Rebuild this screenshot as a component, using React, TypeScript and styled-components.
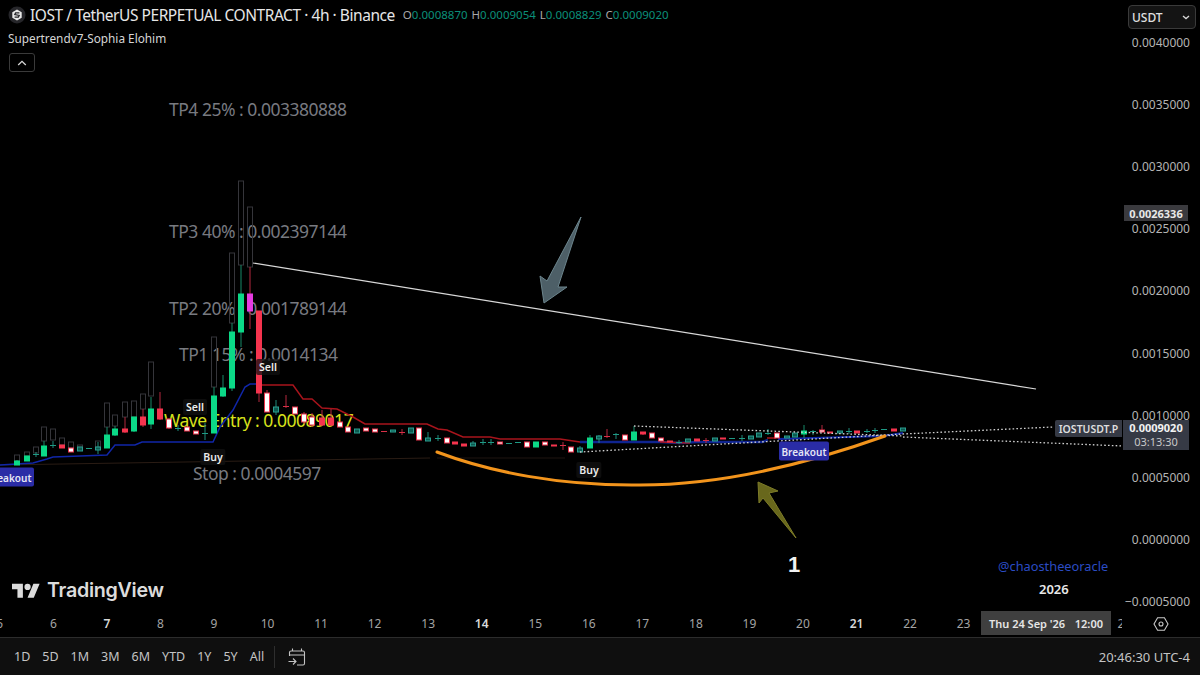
import styled, { createGlobalStyle } from "styled-components";

type CandleKind = "g" | "r" | "w" | "t" | "m" | "d" | "e";
// x, body top, body bottom, kind, wick top, wick bottom, ghost top, ghost bottom
type Candle = [number, number, number, CandleKind, number?, number?, number?, number?];

const CANDLES: Candle[] = [
    [17, 461, 465, "g", 460, 465, 455, 461], [27, 456, 461, "g", 456, 461, 452, 456],
    [36, 454, 455, "d", 452, 457, 447, 453], [44, 446, 456, "g", 441, 456, 427, 441],
    [53, 445, 446, "d", 441, 448, 429, 440], [62, 445, 448, "r", 445, 448, 438, 445],
    [71, 448, 452, "w", 448, 452, 442, 448], [80, 447, 451, "t", 447, 451, 445, 447],
    [89, 448, 449, "d"], [98, 447, 450, "t", 442, 454, 441, 447],
    [107, 435, 448, "g", 427, 448, 403, 427], [115, 429, 435, "g", 426, 436, 415, 426],
    [125, 429, 432, "r", 417, 433, 402, 417], [134, 417, 431, "g", 417, 432, 401, 417],
    [143, 417, 425, "r", 409, 427, 394, 409], [151, 409, 424, "g", 397, 429, 362, 396],
    [160, 409, 419, "r", 392, 420], [169, 419, 428, "w", 418, 429],
    [178, 428, 429, "d", 425, 431], [187, 427, 431, "w"], [196, 431, 434, "w"],
    [205, 433, 434, "d", 423, 440], [214, 396, 433, "g", 387, 433, 337, 387],
    [223, 388, 396, "g", 375, 397], [232, 332, 388, "g", 323, 391, 253, 323],
    [241, 294, 332, "g", 265, 347, 181, 265], [250, 294, 311, "m", 267, 329, 207, 267],
    [259, 311, 393, "r", 311, 402], [267, 393, 412, "w", 390, 412],
    [276, 407, 412, "t", 400, 415], [286, 406, 407, "e", 395, 408], [295, 407, 414, "w"],
    [304, 414, 422, "w", 412, 424], [312, 417, 425, "w", 413, 427], [322, 418, 425, "r", 410, 426],
    [331, 418, 425, "r", 409, 426], [340, 422, 427, "w"], [348, 427, 432, "w"], [357, 429, 433, "t"],
    [366, 428, 431, "w"], [375, 429, 432, "w"], [384, 431, 432, "e"], [393, 430, 432, "t"],
    [402, 432, 433, "e", 429, 435], [411, 428, 433, "t"], [419, 428, 440, "w"],
    [428, 438, 441, "t", 432, 441], [438, 438, 439, "d", 435, 441], [447, 438, 443, "w"],
    [455, 442, 444, "r"], [464, 444, 446, "r"], [473, 443, 446, "t", 441, 446],
    [483, 442, 443, "d", 439, 445], [491, 442, 443, "d", 439, 445], [500, 442, 444, "w"],
    [509, 443, 444, "d"], [518, 442, 443, "d"], [527, 442, 447, "w"], [536, 442, 447, "g"],
    [545, 442, 445, "w"], [554, 445, 446, "r"], [563, 445, 446, "e", 442, 450],
    [571, 447, 452, "w"], [580, 448, 452, "t", 446, 452], [590, 438, 448, "g", 435, 448],
    [599, 436, 439, "t", 435, 443], [607, 436, 437, "e", 429, 438], [616, 434, 435, "d", 433, 439],
    [625, 435, 440, "w"], [634, 432, 440, "g", 426, 440], [643, 432, 434, "r", 432, 435],
    [652, 433, 438, "w"], [661, 438, 441, "w"], [670, 441, 442, "w"], [679, 442, 443, "d", 440, 444],
    [688, 439, 442, "t"], [697, 439, 441, "r"], [706, 440, 441, "e", 438, 443], [715, 438, 441, "t"],
    [723, 438, 439, "r"], [732, 438, 439, "d"], [742, 438, 439, "d", 435, 441], [751, 436, 439, "t"],
    [759, 433, 437, "t"], [768, 433, 434, "d", 429, 435], [777, 433, 438, "w"], [787, 436, 438, "t"],
    [795, 433, 437, "t"], [804, 431, 434, "g", 425, 438], [813, 431, 432, "d", 430, 435],
    [822, 430, 432, "w", 425, 433], [830, 432, 433, "r"], [840, 431, 433, "t"], [849, 431, 432, "d", 428, 434],
    [857, 431, 433, "r"], [867, 431, 432, "d", 429, 433], [875, 430, 431, "d", 428, 433],
    [884, 429, 430, "d"], [894, 429, 431, "r"], [903, 428, 431, "t"],
];

const BODY: Record<CandleKind, { fill: string; stroke: string; wick: string }> = {
    g: { fill: "#0bd987", stroke: "#0bd987", wick: "#168a68" },
    r: { fill: "#f5344e", stroke: "#f5344e", wick: "#b4283e" },
    w: { fill: "#ffffff", stroke: "#e8324a", wick: "#b4283e" },
    t: { fill: "#0d5a50", stroke: "#2a9d8f", wick: "#1f8a7a" },
    m: { fill: "#e53be0", stroke: "#e53be0", wick: "#b4283e" },
    d: { fill: "#1f9a85", stroke: "#1f9a85", wick: "#1f8a7a" },
    e: { fill: "#d92f47", stroke: "#d92f47", wick: "#b4283e" },
};

const PRICES = ["0.0040000", "0.0035000", "0.0030000", "0.0025000", "0.0020000", "0.0015000", "0.0010000", "0.0005000", "0.0000000", "\u22120.0005000"];
const TICKS = [5, 6, 7, 8, 9, 10, 11, 12, 13, 14, 15, 16, 17, 18, 19, 20, 21, 22, 23, 24, 25, 26];
const RANGES = ["1D", "5D", "1M", "3M", "6M", "YTD", "1Y", "5Y", "All"];
const OHLC = [["O", "0.0008870"], ["H", "0.0009054"], ["L", "0.0008829"], ["C", "0.0009020"]];
const FONT = `"Noto Sans", "Open Sans", sans-serif`;

export default function App() {
    return (
        <>
            <GlobalStyle />
            <Page>
                <Main>
                    <ChartColumn>
                        <Pane>
                            <ChartText $x={169} $y={98}>TP4 25% : 0.003380888</ChartText>
                            <ChartText $x={169} $y={220}>TP3 40% : 0.002397144</ChartText>
                            <ChartText $x={169} $y={297}>TP2 20% : 0.001789144</ChartText>
                            <ChartText $x={179} $y={343}>TP1 15% : 0.0014134</ChartText>
                            <ChartText $x={193} $y={462}>Stop : 0.0004597</ChartText>
                            <ChartText $x={164} $y={409} $color="#d8e21c">Wave Entry : 0.00089017</ChartText>

                            <ChartSvg viewBox="0 0 1122 610">
                                <polyline points="0,465 430,458" fill="none" stroke="#2a1c14" strokeWidth="1" />
                                <polyline points="437,458 565,458" fill="none" stroke="#1f1410" strokeWidth="1" />
                                <polyline
                                    points="0,465 33,463 47,459 53,457 107,455 115,445 135,445 142,442 213,442 220,427 233,410 245,387 250,384 259,384"
                                    fill="none" stroke="#1026a8" strokeWidth="1.5"
                                />
                                <polyline
                                    points="580,442 660,442 680,443 697,442 762,442 768,440"
                                    fill="none" stroke="#0f2490" strokeWidth="2.5"
                                />
                                <polyline points="778,439 883,436 903,433" fill="none" stroke="#1026a8" strokeWidth="2" />
                                <polyline
                                    points="259,385 293,385 303,399 312,399 322,408 337,409 353,417 365,424 427,424 438,429 447,430 463,437 490,437 500,439 560,439 580,442"
                                    fill="none" stroke="#a8141c" strokeWidth="1.5"
                                />
                                <polyline points="660,442 690,443" fill="none" stroke="#a8141c" strokeWidth="1.5" />
                                <polyline points="767,438 776,438" fill="none" stroke="#a8141c" strokeWidth="1.5" />

                                {CANDLES.map(([x, top, bottom, kind, wickTop, wickBottom, ghostTop, ghostBottom]) => {
                                    const c = BODY[kind];
                                    const flat = kind === "d" || kind === "e";
                                    return (
                                        <g key={x}>
                                            {ghostTop !== undefined && ghostBottom !== undefined && (
                                                <rect x={x - 2.5} y={ghostTop} width={5} height={ghostBottom - ghostTop} fill="none" stroke="#35353a" strokeWidth="1" />
                                            )}
                                            {wickTop !== undefined && wickBottom !== undefined && (
                                                <line x1={x} x2={x} y1={wickTop} y2={wickBottom} stroke={c.wick} strokeWidth="1" />
                                            )}
                                            {flat ? (
                                                <rect x={x - 3} y={top} width={6} height={bottom - top} fill={c.fill} />
                                            ) : (
                                                <rect x={x - 2.5} y={top} width={5} height={bottom - top} fill={c.fill} stroke={c.stroke} strokeWidth="1" />
                                            )}
                                        </g>
                                    );
                                })}

                                <polyline points="634,426 903,436" fill="none" stroke="#d0d0d0" strokeWidth="1.3" strokeDasharray="1.6 2.2" />
                                <polyline points="580,452 903,434 1053,427" fill="none" stroke="#d0d0d0" strokeWidth="1.3" strokeDasharray="1.6 2.2" />
                                <polyline points="903,437 1123,446" fill="none" stroke="#d0d0d0" strokeWidth="1.3" strokeDasharray="1.6 2.2" />
                                <line x1="253" y1="263" x2="1036" y2="389" stroke="#d8d8d8" strokeWidth="1.2" />
                                <path
                                    d="M437 452 C 490 472 560 486 640 485 C 710 485 790 470 885 436"
                                    fill="none" stroke="#f2941c" strokeWidth="3" strokeLinecap="round"
                                />
                                <polygon points="544,303 540,276 547,281 581,217 558,287 567,287" fill="#4d5f67" stroke="#6c858d" strokeWidth="1" />
                                <polygon points="758,482 778,491 769,493 796,538 763,498 759,503" fill="#68671c" stroke="#7d7c28" strokeWidth="1" />
                            </ChartSvg>

                            <Legend>
                                <TitleRow>
                                    <svg width="18" height="18" viewBox="0 0 18 18">
                                        <circle cx="9" cy="9" r="8.5" fill="#26262a" />
                                        <polygon points="9,3.6 13.7,6.3 13.7,11.7 9,14.4 4.3,11.7 4.3,6.3" fill="#e8e8e8" />
                                        <path d="M11.4 6.9H7.6L6.8 8.6 11.2 9.4 10.4 11.1H6.6" fill="none" stroke="#26262a" strokeWidth="1.3" />
                                    </svg>
                                    <SymbolTitle>IOST / TetherUS PERPETUAL CONTRACT · 4h · Binance</SymbolTitle>
                                    <Ohlc>
                                        {OHLC.map(([k, v]) => (
                                            <span key={k}>{k}<OhlcValue>{v}</OhlcValue></span>
                                        ))}
                                    </Ohlc>
                                </TitleRow>
                                <IndicatorName>Supertrendv7-Sophia Elohim</IndicatorName>
                                <CollapseButton>
                                    <svg width="10" height="6" viewBox="0 0 10 6">
                                        <path d="M1.2 5 5 1.4 8.8 5" fill="none" stroke="#d8d8d8" strokeWidth="1.3" />
                                    </svg>
                                </CollapseButton>
                            </Legend>

                            <ChartTag $x={195} $y={407}>Sell</ChartTag>
                            <ChartTag $x={268} $y={367}>Sell</ChartTag>
                            <ChartTag $x={213} $y={457}>Buy</ChartTag>
                            <ChartTag $x={589} $y={470}>Buy</ChartTag>
                            <BreakoutTag $x={9} $y={477}>Breakout</BreakoutTag>
                            <BreakoutTag $x={804} $y={451}>Breakout</BreakoutTag>

                            <BigNumber>1</BigNumber>
                            <Handle>@chaostheeoracle</Handle>
                            <YearMark>2026</YearMark>
                            <Brand>
                                <svg width="28" height="16" viewBox="0 0 36 20">
                                    <path d="M14 20H7V9H0V2h14v18zM28 20h-8l7.5-18h8L28 20z" fill="#dcdcdc" />
                                    <circle cx="20" cy="6" r="4" fill="#dcdcdc" />
                                </svg>
                                <BrandName>TradingView</BrandName>
                            </Brand>
                            <SymbolTag>IOSTUSDT.P</SymbolTag>
                        </Pane>
                        <TimeAxis>
                            {TICKS.map((t) => (
                                <Tick key={t} $strong={t === 7 || t === 14 || t === 21}>{t}</Tick>
                            ))}
                            <Crosshair>
                                <span>Thu 24 Sep '26</span>
                                <span>12:00</span>
                            </Crosshair>
                        </TimeAxis>
                    </ChartColumn>

                    <PriceColumn>
                        <PriceAxis>
                            <CurrencySelect>
                                USDT
                                <svg width="8" height="5" viewBox="0 0 8 5">
                                    <path d="M1 1l3 2.6L7 1" fill="none" stroke="#d8d8d8" strokeWidth="1.3" />
                                </svg>
                            </CurrencySelect>
                            {PRICES.map((p) => (
                                <PriceLabel key={p}>{p}</PriceLabel>
                            ))}
                            <LevelTag>0.0026336</LevelTag>
                            <LastPriceTag>
                                <strong>0.0009020</strong>
                                <span>03:13:30</span>
                            </LastPriceTag>
                        </PriceAxis>
                        <GearCell>
                            <svg width="16" height="16" viewBox="0 0 16 16">
                                <polygon points="4.6,1.8 11.4,1.8 15,8 11.4,14.2 4.6,14.2 1,8" fill="none" stroke="#c8c8c8" strokeWidth="1.1" />
                                <circle cx="8" cy="8" r="2" fill="none" stroke="#c8c8c8" strokeWidth="1.1" />
                            </svg>
                        </GearCell>
                    </PriceColumn>
                </Main>

                <BottomBar>
                    <Ranges>
                        {RANGES.map((r) => (
                            <RangeButton key={r}>{r}</RangeButton>
                        ))}
                        <Divider />
                        <svg width="20" height="20" viewBox="0 0 20 20">
                            <path
                                d="M5.5 1.5v3M14.5 1.5v3M2.5 9V5.5a1.5 1.5 0 0 1 1.5-1.5h12a1.5 1.5 0 0 1 1.5 1.5v11a1.5 1.5 0 0 1-1.5 1.5H10M2.5 8h15M1.5 14.5h7M6 11.5l3 3-3 3"
                                fill="none" stroke="#c4c4c4" strokeWidth="1.1"
                            />
                        </svg>
                    </Ranges>
                    <Clock>20:46:30 UTC-4</Clock>
                </BottomBar>
            </Page>
        </>
    );
}

const GlobalStyle = createGlobalStyle`
    html, body {
        margin: 0;
        padding: 0;
        background: #000;
    }
`;

const Page = styled.div`
    width: 1200px;
    height: 675px;
    display: flex;
    flex-direction: column;
    overflow: hidden;
    background: #000;
    font-family: ${FONT};
`;

const Main = styled.div`
    flex: 1;
    display: flex;
    min-height: 0;
`;

const ChartColumn = styled.div`
    width: 1122px;
    display: flex;
    flex-direction: column;
`;

const Pane = styled.div`
    position: relative;
    flex: 1;
    overflow: hidden;
`;

const ChartSvg = styled.svg`
    position: absolute;
    inset: 0;
    width: 100%;
    height: 100%;
    z-index: 1;
`;

const Legend = styled.div`
    position: relative;
    z-index: 2;
    display: flex;
    flex-direction: column;
    align-items: flex-start;
    padding: 5px 0 0 8px;
`;

const TitleRow = styled.div`
    display: flex;
    align-items: center;
    height: 19px;
`;

const SymbolTitle = styled.span`
    margin-left: 4px;
    font-size: 15.5px;
    letter-spacing: -0.45px;
    color: #e6e6e6;
    white-space: nowrap;
`;

const Ohlc = styled.span`
    display: flex;
    gap: 4px;
    margin-left: 8px;
    font-size: 11.5px;
    color: #a8a8a8;
`;

const OhlcValue = styled.span`
    color: #0b8f7a;
`;

const IndicatorName = styled.div`
    margin-top: 6px;
    font-size: 11.8px;
    line-height: 16px;
    color: #d6d6d6;
`;

const CollapseButton = styled.div`
    width: 26px;
    height: 19px;
    margin: 7px 0 0 1px;
    display: flex;
    align-items: center;
    justify-content: center;
    border: 1px solid #3a3a3a;
    border-radius: 3px;
    box-sizing: border-box;
`;

const ChartText = styled.div<{ $x: number; $y: number; $color?: string }>`
    position: absolute;
    left: ${(p) => p.$x}px;
    top: ${(p) => p.$y}px;
    font-size: 17.5px;
    letter-spacing: -0.5px;
    line-height: 22px;
    white-space: nowrap;
    color: ${(p) => p.$color ?? "#787a80"};
`;

const ChartTag = styled.div<{ $x: number; $y: number }>`
    position: absolute;
    z-index: 2;
    left: ${(p) => p.$x}px;
    top: ${(p) => p.$y}px;
    transform: translate(-50%, -50%);
    padding: 1px 3px;
    font-size: 10.5px;
    font-weight: 600;
    line-height: 14px;
    color: #ececec;
    background: rgba(18, 18, 18, 0.75);
    border-radius: 2px;
`;

const BreakoutTag = styled.div<{ $x: number; $y: number }>`
    position: absolute;
    z-index: 2;
    left: ${(p) => p.$x}px;
    top: ${(p) => p.$y}px;
    transform: translate(-50%, -50%);
    width: 50px;
    height: 19px;
    display: flex;
    align-items: center;
    justify-content: center;
    font-size: 10px;
    font-weight: 600;
    color: #e6e6f5;
    background: #2a2ca6;
    border-radius: 2px;
`;

const BigNumber = styled.div`
    position: absolute;
    z-index: 2;
    left: 788px;
    top: 552px;
    font-family: "Liberation Sans", sans-serif;
    font-size: 22px;
    font-weight: 700;
    line-height: 26px;
    color: #f2f2f2;
`;

const Handle = styled.div`
    position: absolute;
    z-index: 2;
    left: 998px;
    top: 557px;
    font-size: 12.8px;
    line-height: 18px;
    color: #2b4cc4;
`;

const YearMark = styled.div`
    position: absolute;
    z-index: 2;
    left: 1039px;
    top: 580px;
    font-size: 13px;
    font-weight: 600;
    line-height: 18px;
    color: #e8e8e8;
`;

const Brand = styled.div`
    position: absolute;
    z-index: 2;
    left: 12px;
    bottom: 8px;
    display: flex;
    align-items: center;
    gap: 7px;
`;

const BrandName = styled.span`
    font-family: "Inter", sans-serif;
    font-size: 19.7px;
    font-weight: 600;
    letter-spacing: -0.3px;
    color: #dcdcdc;
`;

const SymbolTag = styled.div`
    position: absolute;
    z-index: 2;
    right: 0;
    top: 420px;
    width: 67px;
    height: 17px;
    display: flex;
    align-items: center;
    justify-content: center;
    font-size: 10.5px;
    font-weight: 600;
    color: #dedede;
    background: #363a45;
    border-radius: 2px 0 0 2px;
`;

const TimeAxis = styled.div`
    position: relative;
    height: 27px;
    display: flex;
    align-items: center;
    overflow: hidden;
`;

const Tick = styled.span<{ $strong: boolean }>`
    flex: 0 0 53.55px;
    text-align: center;
    font-size: 12px;
    font-weight: ${(p) => (p.$strong ? 600 : 400)};
    color: ${(p) => (p.$strong ? "#d8d8d8" : "#a4a4a4")};
    &:first-child {
        margin-left: -27px;
    }
`;

const Crosshair = styled.div`
    position: absolute;
    left: 981px;
    top: 1px;
    width: 130px;
    height: 24px;
    box-sizing: border-box;
    padding: 0 8px;
    display: flex;
    align-items: center;
    justify-content: space-between;
    font-size: 11px;
    font-weight: 600;
    color: #e6e6e6;
    background: #3f3f3f;
`;

const PriceColumn = styled.div`
    position: relative;
    flex: 1;
    display: flex;
    flex-direction: column;
`;

const PriceAxis = styled.div`
    flex: 1;
    display: flex;
    flex-direction: column;
    align-items: flex-end;
    gap: 46.1px;
    padding-right: 10px;
`;

const CurrencySelect = styled.div`
    align-self: flex-end;
    width: 68px;
    height: 24px;
    margin: 5px -6px -40px 0;
    box-sizing: border-box;
    padding: 0 5px 0 3px;
    display: flex;
    align-items: center;
    justify-content: space-between;
    font-size: 12px;
    font-weight: 500;
    color: #e0e0e0;
    background: #141414;
    border: 1px solid #3a3a3a;
    border-radius: 4px;
`;

const PriceLabel = styled.div`
    font-size: 12px;
    line-height: 16px;
    white-space: nowrap;
    color: #b4b4b4;
`;

const LevelTag = styled.div`
    position: absolute;
    left: 2px;
    top: 205px;
    width: 64px;
    height: 16px;
    display: flex;
    align-items: center;
    justify-content: center;
    font-size: 11px;
    font-weight: 700;
    color: #e8e8e8;
    background: #3a3a3e;
`;

const LastPriceTag = styled.div`
    position: absolute;
    left: 1px;
    top: 420px;
    width: 66px;
    height: 30px;
    display: flex;
    flex-direction: column;
    align-items: center;
    justify-content: center;
    font-size: 11px;
    line-height: 14px;
    color: #c8c8c8;
    background: #363a45;
    & strong {
        color: #f2f2f2;
    }
`;

const GearCell = styled.div`
    height: 27px;
    display: flex;
    align-items: center;
    padding-left: 31px;
`;

const BottomBar = styled.div`
    height: 38px;
    box-sizing: border-box;
    display: flex;
    align-items: center;
    justify-content: space-between;
    padding: 0 10px 0 14px;
    background: #0f0f0f;
    border-top: 1px solid #2c2c2c;
`;

const Ranges = styled.div`
    display: flex;
    align-items: center;
    gap: 12px;
`;

const RangeButton = styled.span`
    font-size: 12.5px;
    color: #c4c4c4;
`;

const Divider = styled.span`
    width: 1px;
    height: 22px;
    margin-left: -2px;
    background: #2e2e2e;
`;

const Clock = styled.span`
    font-size: 13px;
    color: #c4c4c4;
`;
